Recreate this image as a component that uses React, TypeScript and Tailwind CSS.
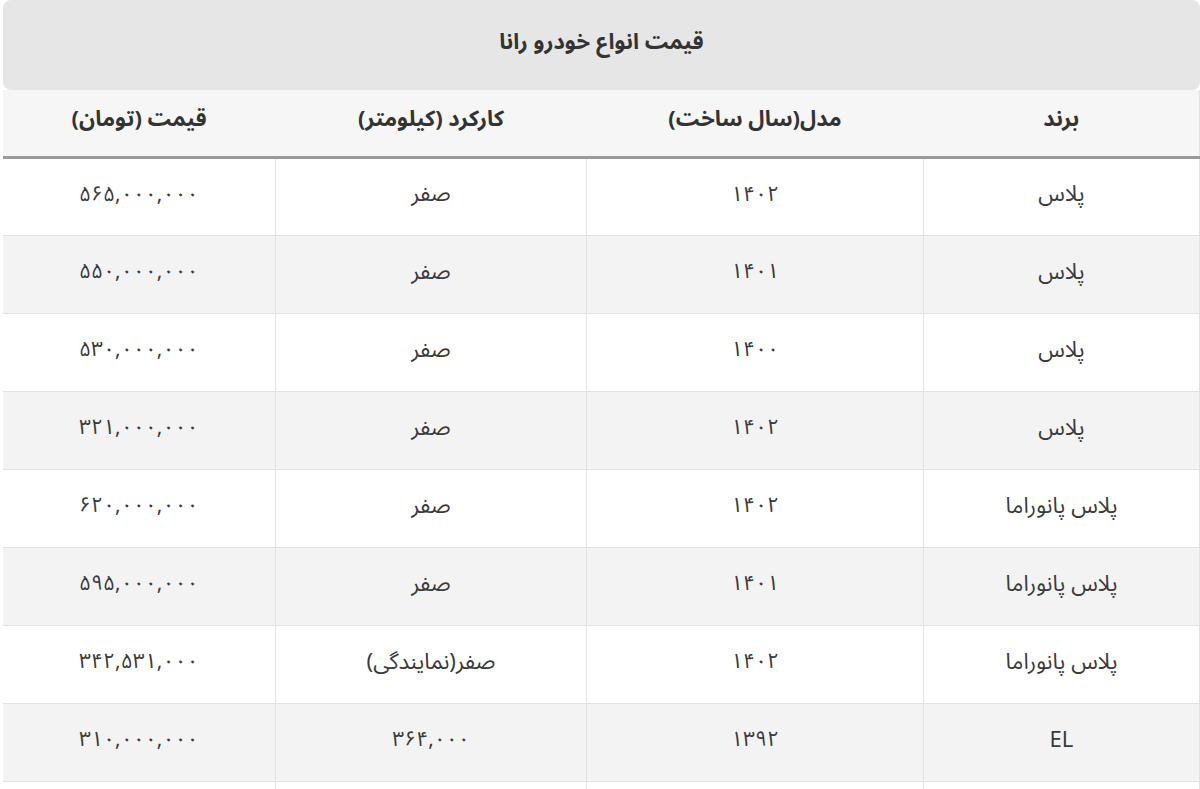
import React from "react";

const rows: [string, string, string, string][] = [
  ["پلاس", "۱۴۰۲", "صفر", "۵۶۵,۰۰۰,۰۰۰"],
  ["پلاس", "۱۴۰۱", "صفر", "۵۵۰,۰۰۰,۰۰۰"],
  ["پلاس", "۱۴۰۰", "صفر", "۵۳۰,۰۰۰,۰۰۰"],
  ["پلاس", "۱۴۰۲", "صفر", "۳۲۱,۰۰۰,۰۰۰"],
  ["پلاس پانوراما", "۱۴۰۲", "صفر", "۶۲۰,۰۰۰,۰۰۰"],
  ["پلاس پانوراما", "۱۴۰۱", "صفر", "۵۹۵,۰۰۰,۰۰۰"],
  ["پلاس پانوراما", "۱۴۰۲", "صفر(نمایندگی)", "۳۴۲,۵۳۱,۰۰۰"],
  ["EL", "۱۳۹۲", "۳۶۴,۰۰۰", "۳۱۰,۰۰۰,۰۰۰"],
  ["", "", "", ""],
];

const isNum = (s: string) => /^[۰-۹,]+$/.test(s);

export default function App() {
  return (
    <div
      dir="rtl"
      className="w-[1200px] h-[789px] overflow-hidden bg-white text-[#333]"
      style={{ fontFamily: '"Noto Sans Arabic", Vazirmatn, "DejaVu Sans", sans-serif' }}
    >
      <div className="w-[1197px]">
        <div className="h-[90px] bg-[#e6e6e6] rounded-[8px] flex items-center justify-center pb-[6px]">
          <span className="text-[22px] font-bold text-[#333]">قیمت انواع خودرو رانا</span>
        </div>
        <table className="w-full table-fixed border-collapse">
          <colgroup>
            <col className="w-[276px]" />
            <col className="w-[337px]" />
            <col className="w-[311px]" />
            <col className="w-[273px]" />
          </colgroup>
          <thead>
            <tr className="h-[67px] bg-[#f6f6f6] border-b-[3px] border-[#9a9a9a]">
              <th className="text-[22px] font-bold text-center align-middle pb-[6px] border-r border-[#e4e4e4]">برند</th>
              <th className="text-[22px] font-bold text-center align-middle pb-[6px]">مدل(سال ساخت)</th>
              <th className="text-[22px] font-bold text-center align-middle pb-[6px]">کارکرد (کیلومتر)</th>
              <th className="text-[22px] font-bold text-center align-middle pb-[6px]">قیمت (تومان)</th>
            </tr>
          </thead>
          <tbody>
            {rows.map((r, i) => (
              <tr
                key={i}
                className={
                  (i % 2 === 0 ? "bg-white" : "bg-[#f3f3f3]") + " h-[78px] border-b border-[#e2e2e2]"
                }
              >
                {r.map((c, j) => (
                  <td
                    key={j}
                    className={
                      (isNum(c) ? "text-[21px] " : "text-[22px] ") +
                      (j === 0 ? "border-r " : "") +
                      (j < 3 ? "border-l " : "") +
                      "text-center align-middle pb-[4px] border-[#e2e2e2] text-[#3a3a3a]"
                    }
                  >
                    {c}
                  </td>
                ))}
              </tr>
            ))}
          </tbody>
        </table>
      </div>
    </div>
  );
}
